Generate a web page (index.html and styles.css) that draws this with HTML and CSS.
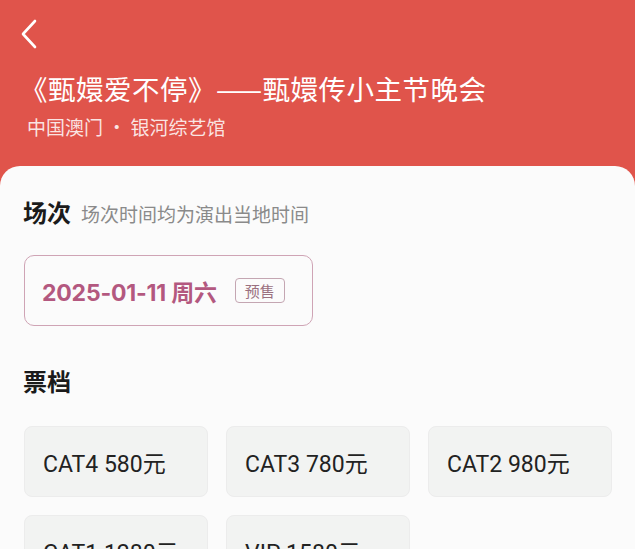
FILE: index.html
```html
<html><head><title>甄嬛爱不停 - 选座</title>
<meta charset="utf-8">
<link rel="stylesheet" href="styles.css">
</head>
<body>

<div class="hero">
  <svg class="back" viewBox="0 0 20 32" width="20" height="32">
    <path d="M16 3 L4 16 L16 29" fill="none" stroke="#fff" stroke-width="2.6" stroke-linecap="round" stroke-linejoin="round"/>
  </svg>
  <h1 class="show-title">《甄嬛爱不停》——甄嬛传小主节晚会</h1>
  <p class="show-place">中国澳门 · 银河综艺馆</p>
</div>

<div class="sheet">
  <div class="section-head">
    <h2>场次</h2>
    <span class="hint">场次时间均为演出当地时间</span>
  </div>
  <div class="session">
    <span class="session-date">2025-01-11 周六</span>
    <span class="tag">预售</span>
  </div>

  <div class="section-head tickets-head">
    <h2>票档</h2>
  </div>
  <div class="tickets">
    <div class="ticket">CAT4 580元</div>
    <div class="ticket">CAT3 780元</div>
    <div class="ticket">CAT2 980元</div>
    <div class="ticket">CAT1 1280元</div>
    <div class="ticket">VIP 1580元</div>
  </div>
</div>

</body></html>
```

FILE: styles.css
```css
:root {
  --red: #e0544b;
  --rose: #b3587f;
  --rose-line: #cfa4b5;
  --ink: #1b1b1b;
  --grey: #8a8a8a;
}

body {
  margin: 0;
  padding: 0;
  background: var(--red);
  font-family: "Noto Sans CJK SC", "Noto Sans", sans-serif;
  overflow: hidden;
  height: 549px;
}

.hero {
  height: 166px;
  padding: 18px 0 0 27px;
  box-sizing: border-box;
  color: #fff;
}

.back {
  display: block;
  margin-left: -8px;
}

.show-title {
  margin: 18px 0 0 -7px;
  font-size: 27.5px;
  font-weight: 400;
  line-height: 40px;
  letter-spacing: 0.5px;
}

.show-place {
  margin: 5px 0 0;
  font-size: 19px;
  line-height: 28px;
  color: rgba(255,255,255,0.85);
}

.sheet {
  background: #fbfbfb;
  border-radius: 20px 20px 0 0;
  padding: 28px 23px 0 23px;
  height: 383px;
}

.section-head {
  display: flex;
  align-items: baseline;
  gap: 10px;
}

.section-head h2 {
  margin: 0;
  font-size: 24px;
  line-height: 36px;
  font-weight: 700;
  color: var(--ink);
}

.hint {
  font-size: 19px;
  color: var(--grey);
}

.session {
  margin-top: 25px;
  margin-left: 1px;
  width: 289px;
  height: 71px;
  box-sizing: border-box;
  border: 1.5px solid var(--rose-line);
  border-radius: 10px;
  display: flex;
  align-items: center;
  padding-left: 17px;
  gap: 18px;
}

.session-date {
  font-family: "Inter", "Noto Sans CJK SC", sans-serif;
  font-size: 23px;
  font-weight: 700;
  color: var(--rose);
  letter-spacing: -0.2px;
}

.tag {
  font-size: 15px;
  color: #9a7080;
  border: 1px solid #c4a6b2;
  border-radius: 4px;
  padding: 0 9px;
  line-height: 23px;
}

.tickets-head {
  margin-top: 37px;
}

.tickets {
  margin-top: 27px;
  margin-left: 1px;
  display: grid;
  grid-template-columns: repeat(3, 184px);
  column-gap: 18px;
  row-gap: 18px;
}

.ticket {
  height: 71px;
  box-sizing: border-box;
  background: #f2f3f2;
  border: 1px solid #ececec;
  border-radius: 8px;
  display: flex;
  align-items: center;
  padding-left: 18px;
  font-family: "Roboto", "Noto Sans CJK SC", sans-serif;
  font-size: 23px;
  color: #222;
}
```
